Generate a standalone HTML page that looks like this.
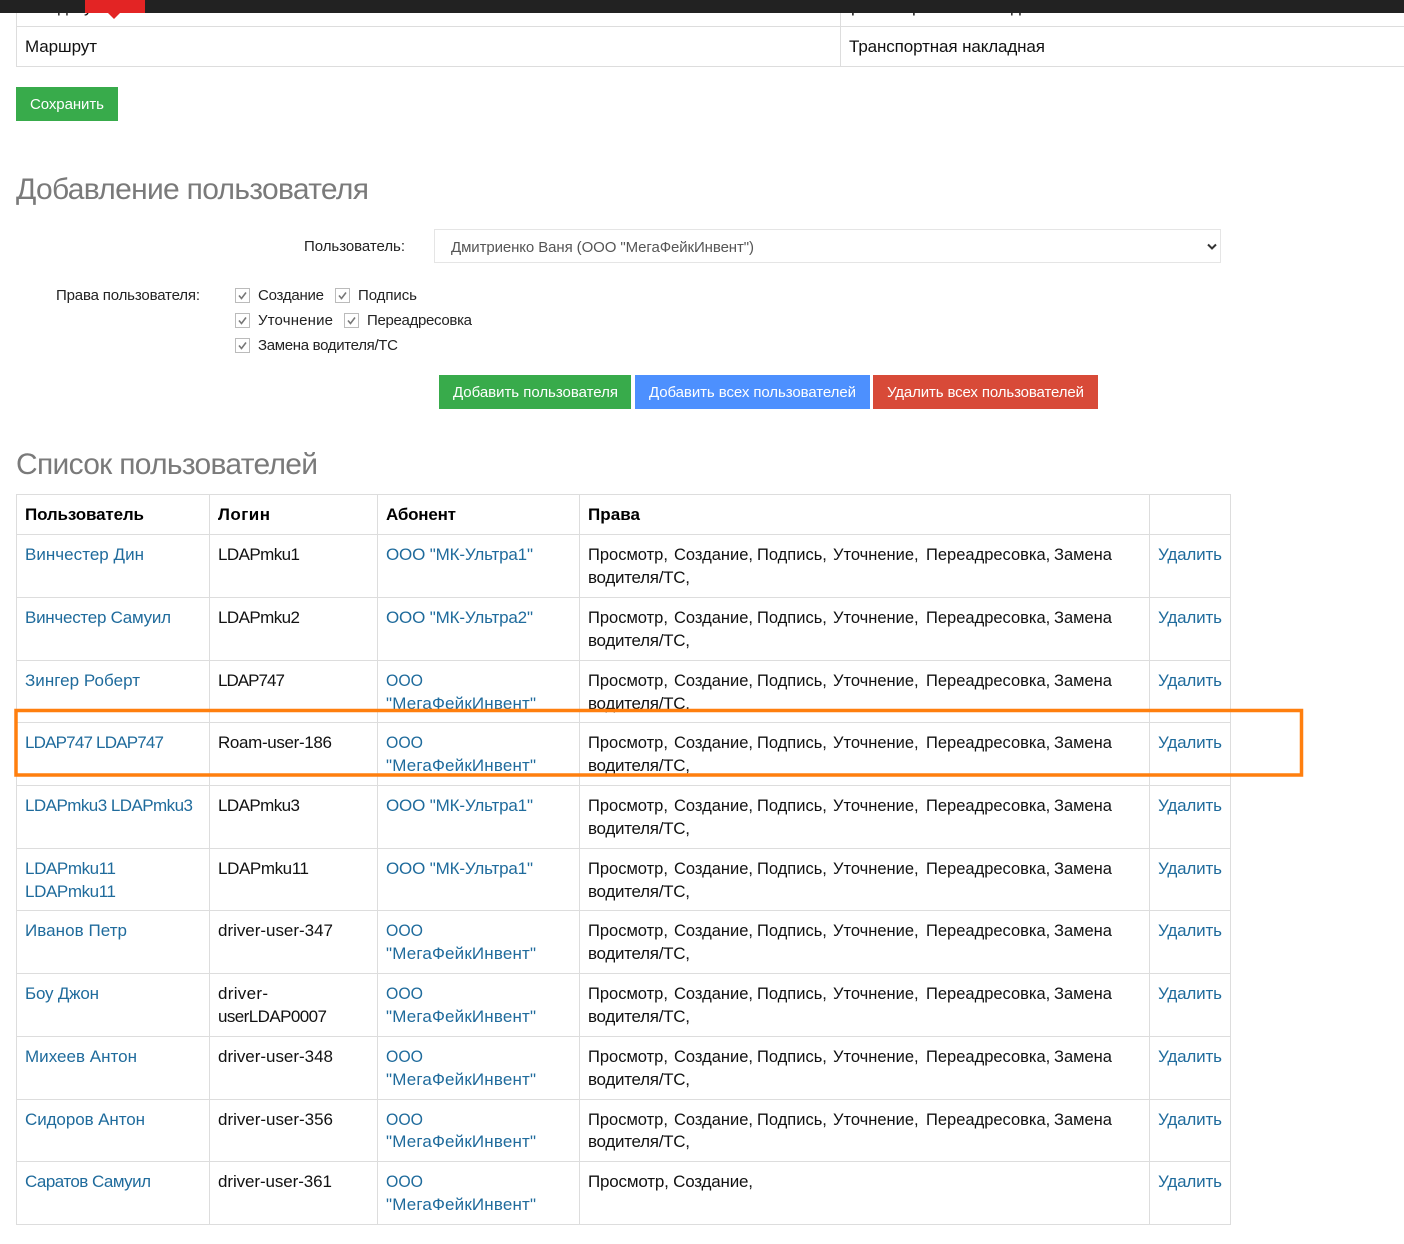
<!DOCTYPE html>
<html lang="ru"><head><meta charset="utf-8"><title>Пользователи</title>
<style>
html,body{margin:0;padding:0;background:#fff;width:1404px;height:1244px;overflow:hidden}
svg{display:block}
text{font-family:"Liberation Sans",sans-serif;font-size:17px;fill:#111}
.a{fill:#1f6b9c}
.b{font-weight:bold;fill:#000}
.p{font-size:16.5px}
.s{font-size:15px;fill:#222}
.w{font-size:15px;fill:#fff}
.h{font-size:30px;fill:#7a7a7a}
.l{stroke:#ddd;stroke-width:1;fill:none;shape-rendering:crispEdges}
.c{fill:#fff;stroke:#bbb;stroke-width:1;shape-rendering:crispEdges}
.k{fill:none;stroke:#777;stroke-width:1.6}
</style></head><body>
<svg xmlns="http://www.w3.org/2000/svg" width="1404" height="1244" viewBox="0 0 1404 1244">
<text x="58" y="12">д</text><text x="84" y="12">у</text>
<text x="851" y="12">р</text><text x="912" y="12">р</text><text x="1011" y="12">д</text>
<path class="l" d="M16.5 13V66.5M840.5 13V66.5M16 26.5H1404M16 66.5H1404"/>
<rect x="0" y="0" width="1404" height="13" fill="#222"/>
<rect x="85" y="0" width="60" height="13" fill="#e32424"/>
<path d="M108 13H120L114 19Z" fill="#e32424"/>
<text x="25" y="52" textLength="72">Маршрут</text>
<text x="849" y="52" textLength="196">Транспортная накладная</text>
<rect x="16" y="87" width="102" height="34" fill="#38ab4b"/>
<text class="w" x="30" y="109" textLength="74">Сохранить</text>

<text class="h" x="16" y="199" textLength="353">Добавление пользователя</text>
<text class="s" x="304" y="251" textLength="101">Пользователь:</text>
<rect x="434.5" y="229.5" width="786" height="33" fill="#fff" stroke="#e5e5e5"/>
<text class="s" x="451" y="252" textLength="303" style="fill:#555">Дмитриенко Ваня (ООО "МегаФейкИнвент")</text>
<path d="M1208 244.5L1212 248.5L1216 244.5" fill="none" stroke="#333" stroke-width="2"/>

<text class="s" x="56" y="300" textLength="144">Права пользователя:</text>
<rect class="c" x="235.5" y="288.5" width="14" height="14"/><path class="k" d="M239 295.500L241.500 298.500L246 292.500"/>
<text class="s" x="258" y="300" textLength="66">Создание</text>
<rect class="c" x="335.500" y="288.500" width="14" height="14"/><path class="k" d="M339 295.500L341.500 298.500L346 292.500"/>
<text class="s" x="358" y="300" textLength="59">Подпись</text>
<rect class="c" x="235.500" y="313.500" width="14" height="14"/><path class="k" d="M239 320.500L241.500 323.500L246 317.500"/>
<text class="s" x="258" y="325" textLength="75">Уточнение</text>
<rect class="c" x="344.500" y="313.500" width="14" height="14"/><path class="k" d="M348 320.500L350.500 323.500L355 317.500"/>
<text class="s" x="367" y="325" textLength="105">Переадресовка</text>
<rect class="c" x="235.500" y="338.500" width="14" height="14"/><path class="k" d="M239 345.500L241.500 348.500L246 342.500"/>
<text class="s" x="258" y="350" textLength="140">Замена водителя/ТС</text>

<rect x="439" y="375" width="192" height="34" fill="#38ab4b"/>
<text class="w" x="453" y="397" textLength="165">Добавить пользователя</text>
<rect x="635" y="375" width="235" height="34" fill="#4d90fe"/>
<text class="w" x="649" y="397" textLength="207">Добавить всех пользователей</text>
<rect x="873" y="375" width="225" height="34" fill="#d84a38"/>
<text class="w" x="887" y="397" textLength="197">Удалить всех пользователей</text>

<text class="h" x="16" y="474" textLength="302">Список пользователей</text>

<path class="l" d="M16.500 494V1224.500M209.500 494V1224.500M377.500 494V1224.500M579.500 494V1224.500M1149.500 494V1224.500M1230.500 494V1224.500M16 494.500H1231M16 534.500H1231M16 597.500H1231M16 660.500H1231M16 722.500H1231M16 785.500H1231M16 848.500H1231M16 910.500H1231M16 973.500H1231M16 1036.500H1231M16 1099.500H1231M16 1161.500H1231M16 1224.500H1231"/>

<text class="b" x="25" y="520" textLength="119">Пользователь</text>
<text class="b" x="218" y="520" textLength="52">Логин</text>
<text class="b" x="386" y="520" textLength="70">Абонент</text>
<text class="b" x="588" y="520" textLength="52">Права</text>

<text class="a" x="25" y="560" textLength="119">Винчестер Дин</text>
<text x="218" y="560" textLength="82">LDAPmku1</text>
<text class="a" x="386" y="560" textLength="147">ООО "МК-Ультра1"</text>
<text class="p" y="560"><tspan x="588">Просмотр,</tspan> <tspan x="674">Создание,</tspan> <tspan x="757">Подпись,</tspan> <tspan x="833">Уточнение,</tspan> <tspan x="926">Переадресовка,</tspan> <tspan x="1054">Замена</tspan></text>
<text x="588" y="583" textLength="102">водителя/ТС,</text>
<text class="a" x="1158" y="560" textLength="64">Удалить</text>

<text class="a" x="25" y="623" textLength="146">Винчестер Самуил</text>
<text x="218" y="623" textLength="82">LDAPmku2</text>
<text class="a" x="386" y="623" textLength="147">ООО "МК-Ультра2"</text>
<text class="p" y="623"><tspan x="588">Просмотр,</tspan> <tspan x="674">Создание,</tspan> <tspan x="757">Подпись,</tspan> <tspan x="833">Уточнение,</tspan> <tspan x="926">Переадресовка,</tspan> <tspan x="1054">Замена</tspan></text>
<text x="588" y="646" textLength="102">водителя/ТС,</text>
<text class="a" x="1158" y="623" textLength="64">Удалить</text>

<text class="a" x="25" y="686" textLength="115">Зингер Роберт</text>
<text x="218" y="686" textLength="67">LDAP747</text>
<text class="a" x="386" y="686" textLength="37" lengthAdjust="spacingAndGlyphs">ООО</text>
<text class="a" x="386" y="709" textLength="150">"МегаФейкИнвент"</text>
<text class="p" y="686"><tspan x="588">Просмотр,</tspan> <tspan x="674">Создание,</tspan> <tspan x="757">Подпись,</tspan> <tspan x="833">Уточнение,</tspan> <tspan x="926">Переадресовка,</tspan> <tspan x="1054">Замена</tspan></text>
<text x="588" y="709" textLength="102">водителя/ТС,</text>
<text class="a" x="1158" y="686" textLength="64">Удалить</text>

<text class="a" x="25" y="748" textLength="139">LDAP747 LDAP747</text>
<text x="218" y="748" textLength="114">Roam-user-186</text>
<text class="a" x="386" y="748" textLength="37" lengthAdjust="spacingAndGlyphs">ООО</text>
<text class="a" x="386" y="771" textLength="150">"МегаФейкИнвент"</text>
<text class="p" y="748"><tspan x="588">Просмотр,</tspan> <tspan x="674">Создание,</tspan> <tspan x="757">Подпись,</tspan> <tspan x="833">Уточнение,</tspan> <tspan x="926">Переадресовка,</tspan> <tspan x="1054">Замена</tspan></text>
<text x="588" y="771" textLength="102">водителя/ТС,</text>
<text class="a" x="1158" y="748" textLength="64">Удалить</text>

<text class="a" x="25" y="811" textLength="168">LDAPmku3 LDAPmku3</text>
<text x="218" y="811" textLength="82">LDAPmku3</text>
<text class="a" x="386" y="811" textLength="147">ООО "МК-Ультра1"</text>
<text class="p" y="811"><tspan x="588">Просмотр,</tspan> <tspan x="674">Создание,</tspan> <tspan x="757">Подпись,</tspan> <tspan x="833">Уточнение,</tspan> <tspan x="926">Переадресовка,</tspan> <tspan x="1054">Замена</tspan></text>
<text x="588" y="834" textLength="102">водителя/ТС,</text>
<text class="a" x="1158" y="811" textLength="64">Удалить</text>

<text class="a" x="25" y="874" textLength="91">LDAPmku11</text>
<text class="a" x="25" y="897" textLength="91">LDAPmku11</text>
<text x="218" y="874" textLength="91">LDAPmku11</text>
<text class="a" x="386" y="874" textLength="147">ООО "МК-Ультра1"</text>
<text class="p" y="874"><tspan x="588">Просмотр,</tspan> <tspan x="674">Создание,</tspan> <tspan x="757">Подпись,</tspan> <tspan x="833">Уточнение,</tspan> <tspan x="926">Переадресовка,</tspan> <tspan x="1054">Замена</tspan></text>
<text x="588" y="897" textLength="102">водителя/ТС,</text>
<text class="a" x="1158" y="874" textLength="64">Удалить</text>

<text class="a" x="25" y="936" textLength="102">Иванов Петр</text>
<text x="218" y="936" textLength="115">driver-user-347</text>
<text class="a" x="386" y="936" textLength="37" lengthAdjust="spacingAndGlyphs">ООО</text>
<text class="a" x="386" y="959" textLength="150">"МегаФейкИнвент"</text>
<text class="p" y="936"><tspan x="588">Просмотр,</tspan> <tspan x="674">Создание,</tspan> <tspan x="757">Подпись,</tspan> <tspan x="833">Уточнение,</tspan> <tspan x="926">Переадресовка,</tspan> <tspan x="1054">Замена</tspan></text>
<text x="588" y="959" textLength="102">водителя/ТС,</text>
<text class="a" x="1158" y="936" textLength="64">Удалить</text>

<text class="a" x="25" y="999" textLength="74">Боу Джон</text>
<text x="218" y="999" textLength="50">driver-</text>
<text x="218" y="1022" textLength="109">userLDAP0007</text>
<text class="a" x="386" y="999" textLength="37" lengthAdjust="spacingAndGlyphs">ООО</text>
<text class="a" x="386" y="1022" textLength="150">"МегаФейкИнвент"</text>
<text class="p" y="999"><tspan x="588">Просмотр,</tspan> <tspan x="674">Создание,</tspan> <tspan x="757">Подпись,</tspan> <tspan x="833">Уточнение,</tspan> <tspan x="926">Переадресовка,</tspan> <tspan x="1054">Замена</tspan></text>
<text x="588" y="1022" textLength="102">водителя/ТС,</text>
<text class="a" x="1158" y="999" textLength="64">Удалить</text>

<text class="a" x="25" y="1062" textLength="112">Михеев Антон</text>
<text x="218" y="1062" textLength="115">driver-user-348</text>
<text class="a" x="386" y="1062" textLength="37" lengthAdjust="spacingAndGlyphs">ООО</text>
<text class="a" x="386" y="1085" textLength="150">"МегаФейкИнвент"</text>
<text class="p" y="1062"><tspan x="588">Просмотр,</tspan> <tspan x="674">Создание,</tspan> <tspan x="757">Подпись,</tspan> <tspan x="833">Уточнение,</tspan> <tspan x="926">Переадресовка,</tspan> <tspan x="1054">Замена</tspan></text>
<text x="588" y="1085" textLength="102">водителя/ТС,</text>
<text class="a" x="1158" y="1062" textLength="64">Удалить</text>

<text class="a" x="25" y="1125" textLength="120">Сидоров Антон</text>
<text x="218" y="1125" textLength="115">driver-user-356</text>
<text class="a" x="386" y="1125" textLength="37" lengthAdjust="spacingAndGlyphs">ООО</text>
<text class="a" x="386" y="1147" textLength="150">"МегаФейкИнвент"</text>
<text class="p" y="1125"><tspan x="588">Просмотр,</tspan> <tspan x="674">Создание,</tspan> <tspan x="757">Подпись,</tspan> <tspan x="833">Уточнение,</tspan> <tspan x="926">Переадресовка,</tspan> <tspan x="1054">Замена</tspan></text>
<text x="588" y="1147" textLength="102">водителя/ТС,</text>
<text class="a" x="1158" y="1125" textLength="64">Удалить</text>

<text class="a" x="25" y="1187" textLength="126">Саратов Самуил</text>
<text x="218" y="1187" textLength="114">driver-user-361</text>
<text class="a" x="386" y="1187" textLength="37" lengthAdjust="spacingAndGlyphs">ООО</text>
<text class="a" x="386" y="1210" textLength="150">"МегаФейкИнвент"</text>
<text x="588" y="1187" textLength="165">Просмотр, Создание,</text>
<text class="a" x="1158" y="1187" textLength="64">Удалить</text>

<rect x="16" y="710.500" width="1285.500" height="64.500" fill="none" stroke="#ff7f0e" stroke-width="3.500"/>
</svg>
</body></html>
